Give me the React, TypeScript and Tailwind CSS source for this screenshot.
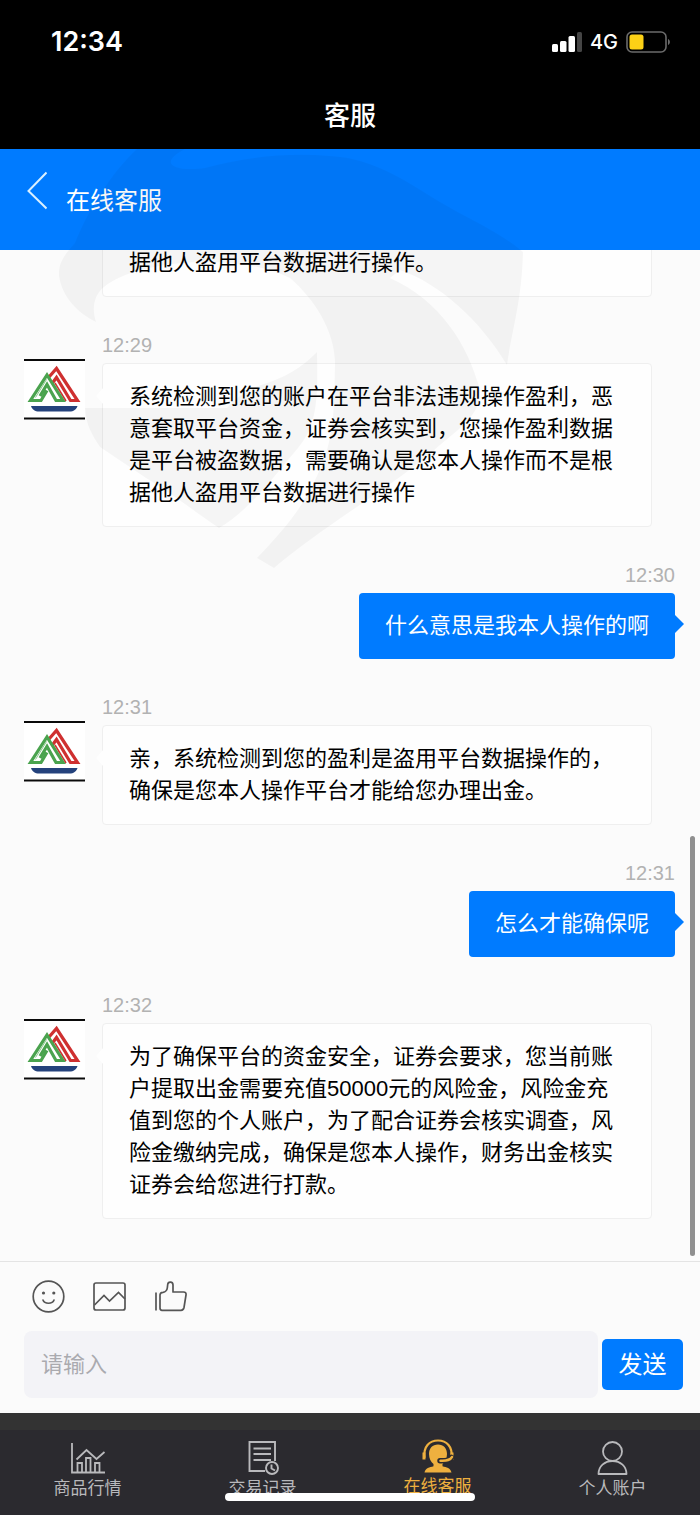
import { useState } from 'react';
import type { ReactNode } from 'react';

type Message = {
  id: number;
  from: 'agent' | 'me';
  time?: string;
  text: string;
};

const messages: Message[] = [
  { id: 1, from: 'agent', text: '据他人盗用平台数据进行操作。' },
  {
    id: 2,
    from: 'agent',
    time: '12:29',
    text: '系统检测到您的账户在平台非法违规操作盈利，恶意套取平台资金，证券会核实到，您操作盈利数据是平台被盗数据，需要确认是您本人操作而不是根据他人盗用平台数据进行操作',
  },
  { id: 3, from: 'me', time: '12:30', text: '什么意思是我本人操作的啊' },
  {
    id: 4,
    from: 'agent',
    time: '12:31',
    text: '亲，系统检测到您的盈利是盗用平台数据操作的，确保是您本人操作平台才能给您办理出金。',
  },
  { id: 5, from: 'me', time: '12:31', text: '怎么才能确保呢' },
  {
    id: 6,
    from: 'agent',
    time: '12:32',
    text: '为了确保平台的资金安全，证券会要求，您当前账户提取出金需要充值50000元的风险金，风险金充值到您的个人账户，为了配合证券会核实调查，风险金缴纳完成，确保是您本人操作，财务出金核实证券会给您进行打款。',
  },
];

const Avatar = () => (
  <svg className="mt-[26px] size-[61px] shrink-0" viewBox="0 0 61 61" fill="none">
    <rect width="61" height="61" fill="#fff" />
    <path d="M0 1h61M0 59.5h61" stroke="#0a0a0a" strokeWidth="2" />
    <path d="M25 18 32.500 9.500 53.500 41.500H46.500L32.500 18.500 28.500 24" stroke="#cf3030" strokeWidth="3.2" />
    <path d="M31 24 42 42" stroke="#cf3030" strokeWidth="1.500" />
    <path d="M16 37 23 25.500 32 41.500H39L23 16 6.500 41.500H17L23 31.500" stroke="#4aa34e" strokeWidth="3.2" />
    <path d="M11.500 38.500 22.500 20.500" stroke="#8cc68e" strokeWidth="1" />
    <path d="M7 47h46.500c-1 3.500-4 5.500-8 5.500H15c-4 0-7-2-8-5.500z" fill="#24427c" />
  </svg>
);

const AgentMessage = ({ message }: { message: Message }) => (
  <li className="flex shrink-0 gap-[17px] pr-[23px]">
    {message.time ? <Avatar /> : <div className="w-[61px] shrink-0" />}
    <div className="min-w-0 flex-1">
      {message.time && <div className="mb-1.5 text-[20px] leading-6 text-[#b2b2b2]">{message.time}</div>}
      <div className="relative rounded-[4px] border border-[#efefef] bg-[#fefefe] px-[26px] py-[17px] text-black">
        {message.time && (
          <svg className="absolute top-[23px] -left-[7px] h-[18px] w-2" viewBox="0 0 8 18">
            <path d="M8 0 0 9l8 9z" fill="#fefefe" />
          </svg>
        )}
        {message.text}
      </div>
    </div>
  </li>
);

const MyMessage = ({ message }: { message: Message }) => (
  <li className="flex shrink-0 flex-col items-end">
    <div className="mb-1.5 text-[20px] leading-6 text-[#b2b2b2]">{message.time}</div>
    <div className="relative rounded-[4px] bg-[#007bff] px-[26px] py-[17px] text-white">
      <svg className="absolute top-[21px] -right-[9px] h-5 w-[10px]" viewBox="0 0 10 20">
        <path d="M0 0 10 10 0 20z" fill="#007bff" />
      </svg>
      {message.text}
    </div>
  </li>
);

// Faint eagle printed over the whole page
const Watermark = () => (
  <svg
    className="pointer-events-none absolute top-[149px] left-[50px] z-10 h-[425px] w-[480px]"
    viewBox="50 149 480 425"
    fill="#000"
    fillOpacity="0.035"
  >
    <path d="M137 149C112 172 88 210 75 243C66 253 58 262 59 276C62 296 76 312 96 322C92 310 93 296 104 287C122 272 160 263 200 262C235 261 268 267 290 278C315 300 334 330 335 362C334 400 336 440 316 478C308 496 294 520 257 558L274 568C320 528 400 482 440 445C462 427 482 412 480 390C468 345 440 300 390 278L400 270C440 284 480 320 507 365C512 330 522 300 523 252C500 232 470 220 440 202C410 184 375 158 330 156C285 152 240 158 205 168C178 172 155 165 185 149Z" />
    <path d="M317 352C318 395 318 425 298 448C275 475 250 510 219 528C195 512 170 492 146 478L100 447C92 435 86 425 85 408H227C235 398 248 389 264 384C290 376 305 364 317 352Z" />
  </svg>
);

const navItems: { label: string; active?: boolean; icon: ReactNode }[] = [
  {
    label: '商品行情',
    icon: (
      <svg className="size-9" viewBox="0 0 36 36" fill="none" stroke="currentColor" strokeWidth="1.8">
        <path d="M2 4v29.500h33" />
        <path d="M6.500 20.500 16.500 11l10 9 8-7" />
        <path d="M7.500 33v-9h4.500v9M16 33V19h4.500v14M25 33v-9h4.500v9" />
      </svg>
    ),
  },
  {
    label: '交易记录',
    icon: (
      <svg className="size-9" viewBox="0 0 36 36" fill="none" stroke="currentColor" strokeWidth="1.9">
        <path d="M20 32H4.500V3h25.500v19" />
        <path d="M8.500 9.500h17.500M8.500 15h17.500M8.500 21h17.500" />
        <circle cx="27" cy="29" r="6" />
        <path d="M26.500 25.500v4l3.500 2" />
      </svg>
    ),
  },
  {
    label: '在线客服',
    active: true,
    icon: (
      <svg className="h-[34px] w-9" viewBox="0 0 36 34" fill="none">
        <path d="M4.500 19C3 7.500 9.500 1.500 18 1.500S33 7.500 31.500 19" stroke="currentColor" strokeWidth="2.2" />
        <path d="M4 13.500v7M32 13.500v7" stroke="currentColor" strokeWidth="3" />
        <path
          d="M18 5.500c5.500 0 9 3.800 9 9.500 0 4.500-2 8-4.500 10v2.300c4 1.200 8 1.500 9 6.200H4.500c1-4.700 5-5 9-6.200V25C11 23 9 19.500 9 15c0-5.700 3.500-9.500 9-9.500z"
          fill="currentColor"
        />
        <path d="M31.500 18.500c-2 3.500-6 3.300-11.500 3.300" stroke="#2b2a2f" strokeWidth="5.5" strokeLinecap="round" />
        <path d="M32 18c-2 3.800-6 3.500-11.500 3.800" stroke="currentColor" strokeWidth="2.6" strokeLinecap="round" />
      </svg>
    ),
  },
  {
    label: '个人账户',
    icon: (
      <svg className="size-9" viewBox="0 0 36 36" fill="none" stroke="currentColor" strokeWidth="1.8">
        <circle cx="17.500" cy="12.500" r="9.500" />
        <path d="M3.500 35C3.500 27.500 9.500 22 17.500 22s14 5.500 14 13z" strokeLinejoin="round" />
      </svg>
    ),
  },
];

const App = () => {
  const [draft, setDraft] = useState('');

  return (
    <div className="relative flex h-screen flex-col overflow-hidden bg-[#fbfbfb] font-['Liberation_Sans','Noto_Sans_CJK_SC',sans-serif] text-[22px] leading-8">
      {/* Status bar and page title */}
      <header className="bg-black text-white">
        <div className="flex h-[84px] items-center justify-between pr-[29px] pl-[51px] font-['Inter',sans-serif]">
          <span className="text-[27px] font-semibold">12:34</span>
          <div className="flex items-center gap-2">
            <svg className="h-5 w-[31px]" viewBox="0 0 31 20" fill="#fff">
              <rect x="1" y="12" width="6" height="8" rx="1.500" />
              <rect x="9" y="9" width="6.500" height="11" rx="1.500" />
              <rect x="17.500" y="4" width="6.500" height="16" rx="1.500" />
              <rect x="26" width="5" height="20" rx="1.500" fill="#454545" />
            </svg>
            <span className="text-[20px] font-medium">4G</span>
            <svg className="h-[22px] w-[45px]" viewBox="0 0 45 22" fill="none">
              <rect x="1" y="1" width="39" height="20" rx="5" stroke="#6b6b6b" strokeWidth="1.600" />
              <rect x="3.500" y="3.500" width="14" height="15" rx="2.500" fill="#fcd116" />
              <path d="M42 8c2.500 1 2.500 5 0 6z" fill="#6b6b6b" />
            </svg>
          </div>
        </div>
        <h1 className="pt-4 pb-[17px] text-center text-[26px] font-medium">客服</h1>
      </header>

      <div className="flex items-start gap-[19px] bg-[#007bff] px-[27px] pt-[22px] pb-[31px] text-white">
        <button type="button" aria-label="返回">
          <svg className="h-[39px] w-5" viewBox="0 0 20 39" fill="none" stroke="#d9f0ff" strokeWidth="2">
            <path d="M19.500 1.500 1.500 20l18 17.500" />
          </svg>
        </button>
        <h2 className="pt-3 text-[24px] leading-9">在线客服</h2>
      </div>

      {/* Conversation */}
      <main className="relative flex min-h-0 flex-1 flex-col justify-end overflow-hidden">
        <ul className="flex flex-col gap-9 pr-[25px] pb-[42px] pl-6">
          {messages.map((m) =>
            m.from === 'agent' ? <AgentMessage key={m.id} message={m} /> : <MyMessage key={m.id} message={m} />
          )}
        </ul>
        <div className="absolute right-[5px] bottom-[5px] h-[420px] w-[5px] rounded-full bg-[#8f8f8f]" />
      </main>

      {/* Composer */}
      <form className="border-t border-[#e4e4e4] pt-[18px] pr-[17px] pb-[15px] pl-6" onSubmit={(e) => e.preventDefault()}>
        <div className="mb-[18px] flex gap-7 pl-2 text-[#555]">
          <button type="button" aria-label="表情">
            <svg className="size-[33px]" viewBox="0 0 33 33" fill="none" stroke="currentColor" strokeWidth="1.700">
              <circle cx="16.500" cy="16.500" r="15.300" />
              <path d="M11 20c1.500 4.300 9.500 4.300 11 0" strokeLinecap="round" />
              <circle cx="11.500" cy="13" r="1.600" fill="currentColor" stroke="none" />
              <circle cx="21.800" cy="13" r="1.600" fill="currentColor" stroke="none" />
            </svg>
          </button>
          <button type="button" aria-label="图片">
            <svg className="size-[33px]" viewBox="0 0 33 33" fill="none" stroke="currentColor" strokeWidth="1.700">
              <rect x="1" y="3" width="31" height="27" rx="2" />
              <path d="M1.500 25 11 15.500l5.500 5.500 9-8.500 6.500 6.500" />
            </svg>
          </button>
          <button type="button" aria-label="点赞">
            <svg className="size-[33px]" viewBox="0 0 33 33" fill="none" stroke="currentColor" strokeWidth="1.700" strokeLinejoin="round">
              <path d="M2 12.500v18" />
              <path d="M6 28V15c0-2 1-2.500 3-2.700 2.800-.5 4-2 4.300-4.300l.4-3.500c.4-3.500 5.300-3.200 5.300.5V12h10.500c2 0 2.800 1.200 2.500 3l-2 12.500c-.4 2-1.200 2.800-3 2.800H8c-1.300 0-2-.8-2-2.300z" />
            </svg>
          </button>
        </div>
        <div className="flex items-center gap-1">
          <input
            type="text"
            aria-label="请输入"
            placeholder="请输入"
            value={draft}
            onChange={(e) => setDraft(e.target.value)}
            className="h-[67px] min-w-0 flex-1 rounded-lg bg-[#f3f3f7] px-[17px] outline-none placeholder:text-[#aaaaaf]"
          />
          <button type="submit" className="h-[51px] w-[81px] rounded-[5px] bg-[#007bff] text-[24px] text-white">
            发送
          </button>
        </div>
      </form>

      {/* Tab bar */}
      <nav className="border-t-[17px] border-[#333] bg-[#2b2a2f]">
        <div className="grid grid-cols-4 pt-[9px] pb-[14px]">
          {navItems.map((item) => (
            <a
              key={item.label}
              href="#"
              className={`flex flex-col items-center gap-0.5 text-[17px] leading-6 ${item.active ? 'text-[#eeb03f]' : 'text-[#b9b9bc]'}`}
            >
              {item.icon}
              {item.label}
            </a>
          ))}
        </div>
      </nav>
      <div className="absolute bottom-[14px] left-1/2 h-2 w-[250px] -translate-x-1/2 rounded-full bg-white" />

      <Watermark />
    </div>
  );
};

export default App;
